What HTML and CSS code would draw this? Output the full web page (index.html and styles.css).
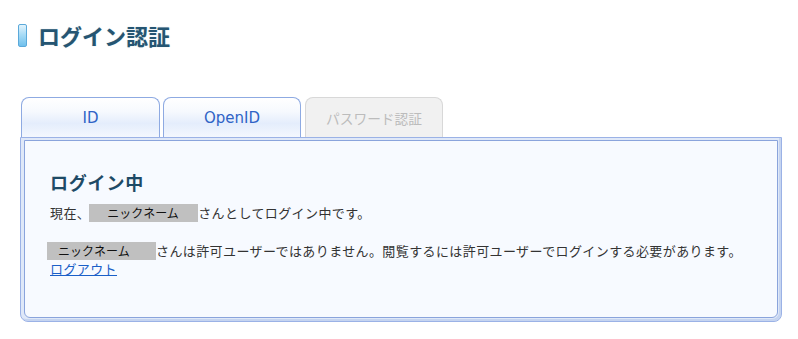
FILE: index.html
```html
<!DOCTYPE html>
<html lang="ja">
<head>
    <meta charset="UTF-8">
    <title>ログイン認証</title>
    <link rel="stylesheet" href="styles.css">
</head>
<body>
    <div class="page">
        <h1 class="title"><span class="title-bar"></span>ログイン認証</h1>

        <div class="tabs">
            <div class="tab tab-first">ID</div>
            <div class="tab">OpenID</div>
            <div class="tab tab-disabled">パスワード認証</div>
        </div>

        <div class="panel">
            <div class="panel-inner">
                <h2 class="panel-title">ログイン中</h2>
                <p class="line">現在、<span class="nick nick-first">ニックネーム</span>さんとしてログイン中です。</p>
                <p class="line line-gap"><span class="nick nick-second">ニックネーム</span>さんは許可ユーザーではありません。閲覧するには許可ユーザーでログインする必要があります。<br><a href="#" class="logout">ログアウト</a></p>
            </div>
        </div>
    </div>
</body>
</html>
```

FILE: styles.css
```css
* {
    margin: 0;
    padding: 0;
    box-sizing: border-box;
}

body {
    font-family: "Noto Sans CJK JP", "DejaVu Sans", sans-serif;
    background: #fff;
    color: #333;
    font-size: 13px;
}

.page {
    padding: 22px 16px 0 20px;
}

.title {
    display: flex;
    align-items: center;
    gap: 11px;
    margin-left: -2px;
    font-size: 22px;
    font-weight: bold;
    color: #255572;
    line-height: 27px;
    text-shadow: 0 0 1px rgba(37, 85, 114, 0.35);
}

.title-bar {
    display: inline-block;
    width: 9px;
    height: 23px;
    border: 1px solid #5ba9da;
    border-radius: 2px;
    background: linear-gradient(#e2f3fc 0%, #a9dcf6 45%, #70c0ec 100%);
}

.tabs {
    display: flex;
    gap: 3px;
    margin-top: 48px;
    padding-left: 1px;
}

.tab {
    width: 138px;
    height: 40px;
    border: 1px solid #8eaae2;
    border-bottom: none;
    border-radius: 8px 8px 0 0;
    background: linear-gradient(#ffffff 0%, #f6f9fe 35%, #e4edfc 65%, #f3f7fe 100%);
    color: #2f63c6;
    font-family: "DejaVu Sans", "Noto Sans CJK JP", sans-serif;
    font-size: 15px;
    text-align: center;
    line-height: 40px;
}

.tab-first {
    width: 139px;
}

.tab-disabled {
    margin-left: 1px;
    border-color: #d8d8d8;
    background: #f1f1f1;
    color: #bcbcbc;
    font-family: "Noto Sans CJK JP", sans-serif;
    font-size: 13.7px;
}

.panel {
    width: 762px;
    border: 1px solid #9bb2e6;
    border-radius: 0 0 8px 8px;
    padding: 2px 3px 3px 3px;
    background: #dfe8f8;
    box-shadow: inset -2px -2px 0 #c5d4f0;
}

.panel-inner {
    border: 1px solid #8aa4dc;
    border-radius: 0 0 6px 6px;
    background: #f7faff;
    padding: 29px 20px 35px 25px;
    min-height: 178px;
}

.panel-title {
    font-size: 18px;
    letter-spacing: 0.8px;
    font-weight: bold;
    color: #1e4a66;
    line-height: 24px;
    margin-bottom: 10px;
}

.line {
    line-height: 18px;
    letter-spacing: 0.4px;
}

.line-gap {
    margin-top: 20px;
}

.nick {
    display: inline-block;
    width: 109px;
    height: 18px;
    line-height: 18px;
    background: #c0c0c0;
    color: #111;
    font-size: 12px;
    letter-spacing: 0;
    vertical-align: top;
}

.nick-first {
    margin-left: -1px;
    padding-left: 18px;
}

.nick-second {
    margin-left: -3px;
    padding-left: 11px;
}

.logout {
    color: #1a5fc8;
    text-decoration: underline;
}
```
